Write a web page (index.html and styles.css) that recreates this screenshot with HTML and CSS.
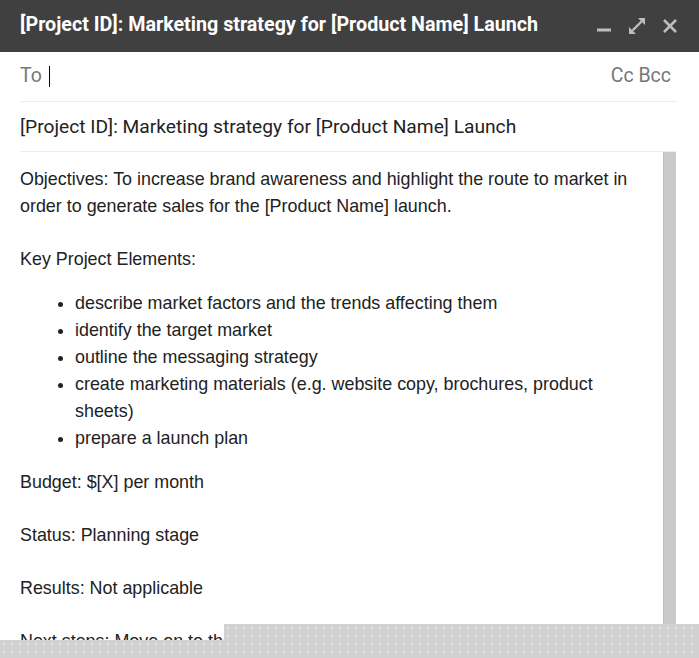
FILE: index.html
```html
<!DOCTYPE html>
<html>
<head>
<meta charset="utf-8">
<link rel="stylesheet" href="styles.css">
</head>
<body>
<div class="window">
  <div class="header">
    <div class="title">[Project ID]: Marketing strategy for [Product Name] Launch</div>
    <div class="controls">
      <svg class="ic" width="16" height="16" viewBox="0 0 16 16"><rect x="1" y="10.5" width="14" height="3" fill="#bdbdbd"/></svg>
      <svg class="ic" width="16" height="16" viewBox="0 0 16 16"><path d="M16 0 L9 0 L16 7 Z M0 16 L0 9 L7 16 Z" fill="#bdbdbd"/><path d="M3.5 12.5 L12.5 3.5" stroke="#bdbdbd" stroke-width="2.4"/></svg>
      <svg class="ic" width="16" height="16" viewBox="0 0 16 16"><path d="M2 2 L14 14 M14 2 L2 14" stroke="#bdbdbd" stroke-width="2.6"/></svg>
    </div>
  </div>
  <div class="field to">
    <span class="label">To</span><span class="cursor"></span>
    <span class="ccbcc">Cc Bcc</span>
  </div>
  <div class="field subject">[Project ID]: Marketing strategy for [Product Name] Launch</div>
  <div class="body">
    <div class="content">
      <p>Objectives: To increase brand awareness and highlight the route to market in order to generate sales for the [Product Name] launch.</p>
      <p class="tight">Key Project Elements:</p>
      <ul>
        <li>describe market factors and the trends affecting them</li>
        <li>identify the target market</li>
        <li>outline the messaging strategy</li>
        <li>create marketing materials (e.g. website copy, brochures, product sheets)</li>
        <li>prepare a launch plan</li>
      </ul>
      <p>Budget: $[X] per month</p>
      <p>Status: Planning stage</p>
      <p>Results: Not applicable</p>
      <p>Next steps: Move on to the next stage</p>
    </div>
    <div class="scrollbar"></div>
  </div>
  <div class="veil veil-right"></div>
  <div class="veil veil-left"></div>
</div>
</body>
</html>
```
FILE: styles.css
```css
html, body {
  margin: 0;
  padding: 0;
  background: #fff;
}
.window {
  position: relative;
  width: 699px;
  height: 658px;
  overflow: hidden;
  background: #fff;
}
.header {
  height: 52px;
  background: #404040;
  display: flex;
  align-items: center;
  padding: 0 20px;
  box-sizing: border-box;
}
.title {
  flex: 1;
  color: #fff;
  font-family: Roboto, "Liberation Sans", sans-serif;
  font-weight: 700;
  font-size: 19.7px;
  margin-top: -3px;
}
.controls {
  display: flex;
  gap: 17px;
  align-items: center;
  margin-right: 1px;
}
.ic {
  display: block;
}
.field {
  margin: 0 22px 0 20px;
  height: 49px;
  border-bottom: 1px solid #ececec;
  display: flex;
  align-items: center;
  font-family: Roboto, "Liberation Sans", sans-serif;
}
.to {
  font-size: 19.5px;
  color: #777;
}
.label {
  margin-top: -2px;
}
.cursor {
  display: inline-block;
  width: 1px;
  height: 21px;
  background: #000;
  margin-left: 7px;
}
.ccbcc {
  margin-left: auto;
  margin-right: 6px;
  margin-top: -2px;
}
.subject {
  font-size: 19.2px;
  color: #222;
}
.body {
  display: flex;
  height: 520px;
}
.content {
  width: 663px;
  padding: 14px 12px 0 20px;
  box-sizing: border-box;
  font-family: "Liberation Sans", Arial, sans-serif;
  font-size: 17.9px;
  line-height: 27px;
  color: #222;
}
.content p {
  margin: 0 0 26px 0;
}
.content p.tight {
  margin-bottom: 17px;
}
.content ul {
  margin: 0 0 17px 0;
  padding-left: 55px;
}
.scrollbar {
  width: 13px;
  height: 473px;
  background: #c9c9c9;
  border-left: 1px solid #bdbdbd;
  box-sizing: border-box;
}
.veil {
  position: absolute;
  background-color: #d1d1d1;
  background-image: radial-gradient(circle, #e6e6e6 0.9px, transparent 1.2px);
  background-size: 8px 8px;
}
.veil-right {
  left: 224px;
  right: 0;
  top: 624px;
  bottom: 0;
}
.veil-left {
  left: 0;
  width: 224px;
  top: 640px;
  bottom: 0;
}
```
